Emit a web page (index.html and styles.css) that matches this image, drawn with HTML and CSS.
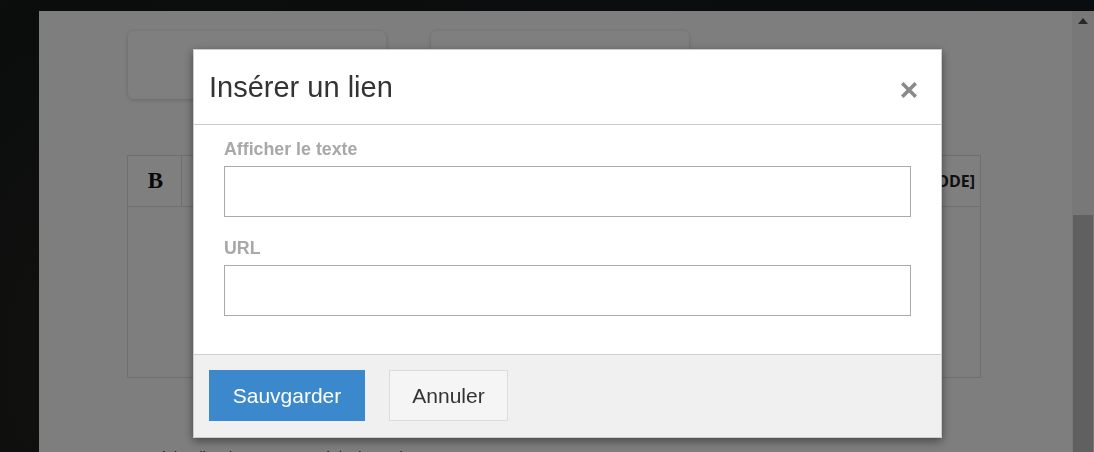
FILE: index.html
```html
<!DOCTYPE html>
<html lang="fr">
<head>
    <meta charset="UTF-8">
    <meta name="viewport" content="width=device-width, initial-scale=1.0">
    <title>Nouveau message</title>
    <link rel="stylesheet" href="styles.css">
</head>
<body>
    <div class="backdrop-side"></div>
    <div class="page">
        <div class="page-content">
            <!-- Option cards -->
            <div class="cards">
                <div class="card"></div>
                <div class="card"></div>
            </div>

            <!-- Editor -->
            <div class="editor">
                <div class="editor-toolbar">
                    <button class="tool tool-bold">B</button>
                    <span class="tool-spacer"></span>
                    <button class="tool tool-code">[CODE]</button>
                </div>
                <div class="editor-area"></div>
            </div>

            <p class="page-note">Prévisualiser le message · Régler les options</p>
        </div>
        <div class="scrollbar">
            <div class="scroll-arrow"></div>
            <div class="scroll-thumb"></div>
        </div>
    </div>

    <!-- Link dialog -->
    <div class="overlay"></div>
    <div class="modal">
        <div class="modal-header">
            <h3>Insérer un lien</h3>
            <button class="modal-close" aria-label="Fermer">
                <svg width="16" height="16" viewBox="0 0 16 16">
                    <path d="M2.5 2.5 L13.5 13.5 M13.5 2.5 L2.5 13.5" stroke="#8a8a8a" stroke-width="3.6" stroke-linecap="square"/>
                </svg>
            </button>
        </div>
        <div class="modal-body">
            <label for="linkText">Afficher le texte</label>
            <input type="text" id="linkText">
            <label for="linkUrl">URL</label>
            <input type="url" id="linkUrl">
        </div>
        <div class="modal-footer">
            <button class="btn btn-primary">Sauvgarder</button>
            <button class="btn btn-default">Annuler</button>
        </div>
    </div>
</body>
</html>
```

FILE: styles.css
```css
html, body {
    height: 100%;
}
body {
    margin: 0;
    display: flex;
    overflow: hidden;
    font-family: "Liberation Sans", Arial, sans-serif;
    background: radial-gradient(circle at 20% 80%, #2a2620 0%, #161a1b 40%, #141b1e 100%);
}
.backdrop-side {
    width: 39px;
    flex: none;
}
.page {
    flex: 1;
    display: flex;
    margin-top: 11px;
    background-color: #fdfdfd;
}
.page-content {
    flex: 1;
    padding: 20px 0 0 88px;
}
.cards {
    display: flex;
    gap: 45px;
    margin-left: 1px;
}
.card {
    width: 258px;
    height: 68px;
    background-color: #fff;
    border-radius: 6px;
    box-shadow: 0 1px 5px rgba(0, 0, 0, 0.18);
}
.editor {
    width: 854px;
    height: 223px;
    margin-top: 56px;
    border: 1px solid #dedede;
    box-sizing: border-box;
    display: flex;
    flex-direction: column;
}
.editor-toolbar {
    height: 50px;
    display: flex;
    border-bottom: 1px solid #dedede;
    background-color: #fff;
}
.tool {
    border: none;
    background: none;
    padding: 0;
    font-weight: bold;
    color: #111;
}
.tool-bold {
    width: 54px;
    padding-left: 2px;
    border-right: 1px solid #dedede;
    font-family: "Liberation Serif", "Times New Roman", serif;
    font-size: 23px;
}
.tool-spacer {
    flex: 1;
}
.tool-code {
    font-family: "Open Sans", sans-serif;
    font-size: 16px;
    padding: 0 5px 0 8px;
    color: #222;
}
.editor-area {
    flex: 1;
}
.page-note {
    margin: 71px 0 0 18px;
    font-size: 14px;
    color: #333;
}
.scrollbar {
    width: 22px;
    display: flex;
    flex-direction: column;
    align-items: center;
    background-color: #f1f1f1;
}
.scroll-arrow {
    margin-top: 7px;
    width: 0;
    height: 0;
    border-left: 5px solid transparent;
    border-right: 5px solid transparent;
    border-bottom: 6px solid #505050;
}
.scroll-thumb {
    width: 20px;
    margin-top: 191px;
    flex: 1;
    background-color: #c0c0c0;
}

/* dialog */
.overlay {
    position: fixed;
    inset: 0;
    background-color: rgba(0, 0, 0, 0.5);
}
.modal {
    position: fixed;
    left: 193px;
    top: 49px;
    width: 749px;
    box-sizing: border-box;
    background-color: #fff;
    border: 1px solid rgba(0, 0, 0, 0.2);
    box-shadow: 0 3px 9px rgba(0, 0, 0, 0.45);
}
.modal-header {
    height: 74px;
    display: flex;
    align-items: center;
    padding: 0 24px 0 15px;
    border-bottom: 1px solid #cbcbcb;
}
.modal-header h3 {
    flex: 1;
    margin: 0;
    font-size: 29px;
    font-weight: normal;
    color: #333;
}
.modal-close {
    border: none;
    background: none;
    padding: 0;
    margin-top: 6px;
    display: flex;
}
.modal-body {
    padding: 14px 30px 38px 30px;
    display: flex;
    flex-direction: column;
}
.modal-body label {
    font-size: 17.8px;
    line-height: 20px;
    font-weight: bold;
    color: #a8a8a8;
    margin-bottom: 7px;
}
.modal-body input {
    height: 51px;
    box-sizing: border-box;
    border: 1px solid #aaa;
    padding: 6px 10px;
    font-size: 16px;
}
.modal-body input + label {
    margin-top: 21px;
}
.modal-footer {
    display: flex;
    gap: 24px;
    padding: 15px 15px 16px;
    background-color: #f0f0f0;
    border-top: 1px solid #cfcfcf;
}
.btn {
    height: 51px;
    font-family: "Liberation Sans", Arial, sans-serif;
    font-size: 21px;
    cursor: pointer;
}
.btn-primary {
    width: 156px;
    border: none;
    background-color: #3b88cd;
    color: #fff;
}
.btn-default {
    width: 119px;
    border: 1px solid #dcdcdc;
    background-color: #f5f5f5;
    color: #333;
}
```
